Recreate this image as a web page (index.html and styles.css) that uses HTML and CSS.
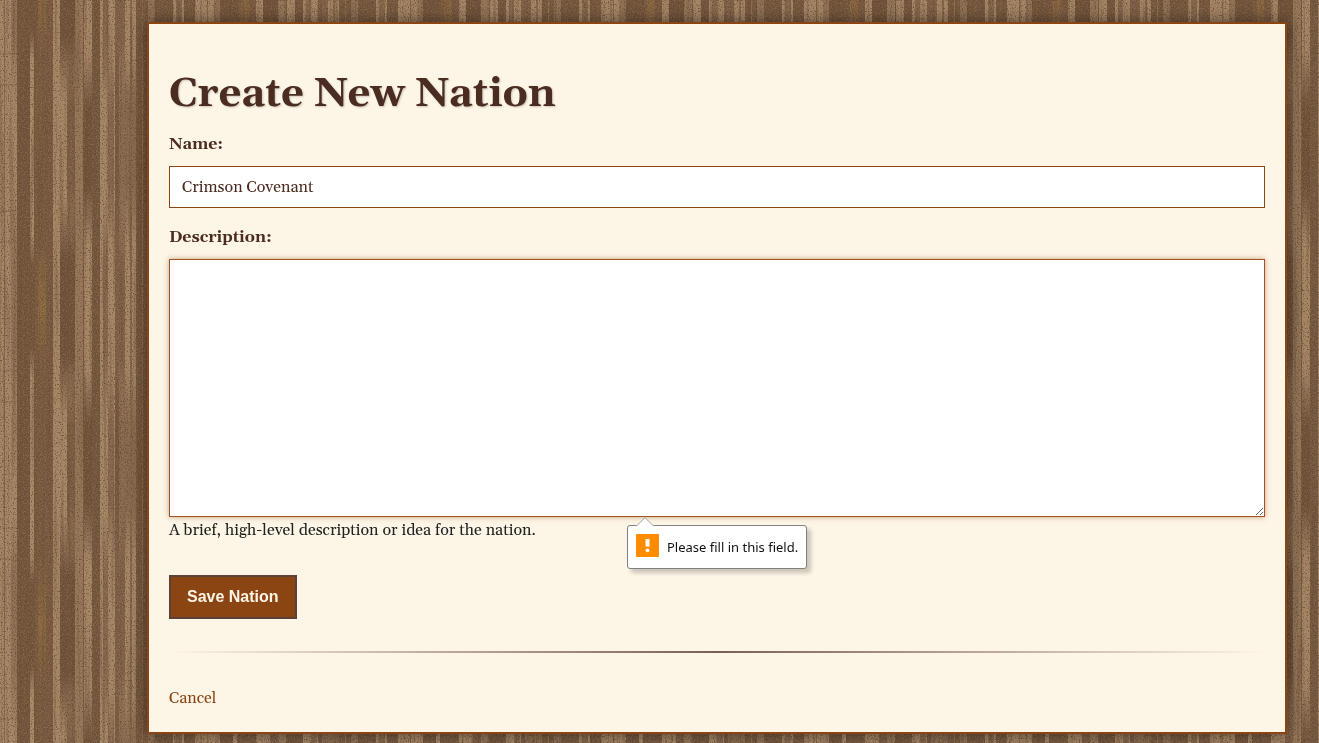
FILE: index.html
```html
<!DOCTYPE html>
<html lang="en">
<head>
<meta charset="utf-8">
<title>Create New Nation</title>
<link rel="stylesheet" href="styles.css">
</head>
<body>
<svg class="wood" aria-hidden="true">
  <defs>
    <filter id="speckle" x="0" y="0" width="100%" height="100%" color-interpolation-filters="sRGB">
      <feTurbulence type="fractalNoise" baseFrequency="0.83 0.71" numOctaves="2" seed="8"/>
      <feColorMatrix values="0 0 0 0 0.38  0 0 0 0 0.27  0 0 0 0 0.18  5 0 0 0 -2.7"/>
    </filter>
    <filter id="fleck" x="0" y="0" width="100%" height="100%" color-interpolation-filters="sRGB">
      <feTurbulence type="fractalNoise" baseFrequency="0.77 0.63" numOctaves="2" seed="21"/>
      <feColorMatrix values="0 0 0 0 0.68  0 0 0 0 0.54  0 0 0 0 0.38  5 0 0 0 -2.6"/>
    </filter>
    <filter id="streak" x="0" y="0" width="100%" height="100%" color-interpolation-filters="sRGB">
      <feTurbulence type="fractalNoise" baseFrequency="0.31 0.008" numOctaves="2" seed="3"/>
      <feColorMatrix values="0 0 0 0 0.42  0 0 0 0 0.31  0 0 0 0 0.22  5 0 0 0 -2.5"/>
    </filter>
    <linearGradient id="mid" gradientUnits="userSpaceOnUse" x1="0" y1="148" x2="0" y2="306" spreadMethod="reflect">
      <stop offset="0.3" stop-color="#6f523b" stop-opacity="0"/>
      <stop offset="0.7" stop-color="#6f523b"/>
    </linearGradient>
    <linearGradient id="end" gradientUnits="userSpaceOnUse" x1="0" y1="148" x2="0" y2="306" spreadMethod="reflect">
      <stop offset="0.25" stop-color="#6f523b"/>
      <stop offset="0.6" stop-color="#6f523b" stop-opacity="0"/>
    </linearGradient>
    <linearGradient id="light" gradientUnits="userSpaceOnUse" x1="0" y1="148" x2="0" y2="306" spreadMethod="reflect">
      <stop offset="0.55" stop-color="#a88a6a"/>
      <stop offset="0.75" stop-color="#a88a6a" stop-opacity="0"/>
    </linearGradient>
    <linearGradient id="ochre" gradientUnits="userSpaceOnUse" x1="0" y1="148" x2="0" y2="306" spreadMethod="reflect">
      <stop offset="0.6" stop-color="#8b6840" stop-opacity="0"/>
      <stop offset="1" stop-color="#8b6840"/>
    </linearGradient>
    <pattern id="planks" width="203" height="317" patternUnits="userSpaceOnUse">
      <rect width="203" height="317" fill="#a58667"/>
      <rect x="4" width="1" height="317" fill="#84674c"/>
      <rect x="11" width="6" height="317" fill="url(#mid)" opacity="0.4"/>
      <rect x="17" width="18" height="317" fill="#73553d"/>
      <rect x="30" width="4" height="317" fill="url(#light)"/>
      <rect x="35" width="18" height="317" fill="#785a41"/>
      <rect x="38" width="8" height="317" fill="url(#ochre)"/>
      <rect x="60" width="15" height="317" fill="url(#mid)"/>
      <rect x="67" width="8" height="317" fill="url(#end)" opacity="0.8"/>
      <rect x="75" width="8" height="317" fill="#94775a"/>
      <rect x="83" width="10" height="317" fill="url(#end)"/>
      <rect x="83" width="1" height="317" fill="#765940"/>
      <rect x="92" width="8" height="317" fill="#74573f"/>
      <rect x="103" width="5" height="317" fill="url(#mid)" opacity="0.6"/>
      <rect x="108" width="6" height="317" fill="url(#end)" opacity="0.6"/>
      <rect x="115" width="4" height="317" fill="#7d6047"/>
      <rect x="119" width="6" height="317" fill="url(#mid)" opacity="0.7"/>
      <rect x="115" width="21" height="317" fill="url(#end)" opacity="0.55"/>
      <rect x="130" width="2" height="317" fill="#84674c"/>
      <rect x="136" width="12" height="317" fill="#765940"/>
      <rect x="142" width="1" height="317" fill="#94714a"/>
      <rect x="148" width="7" height="317" fill="#8d7055"/>
      <rect x="155" width="18" height="317" fill="#755840"/>
      <rect x="176" width="6" height="317" fill="#84674c"/>
      <rect x="184" width="11" height="317" fill="#765940"/>
      <path d="M0 54h17M0 85h28M0 211h17M0 242h28" stroke="#765940" opacity="0.6"/>
    </pattern>
  </defs>
  <rect width="100%" height="100%" fill="url(#planks)"/>
  <rect width="100%" height="100%" filter="url(#streak)" opacity="0.35"/>
  <rect width="100%" height="100%" filter="url(#speckle)" opacity="0.7"/>
  <rect width="100%" height="100%" filter="url(#fleck)" opacity="0.35"/>
</svg>
<main class="panel">
  <h1 class="title">Create New Nation</h1>
  <form class="form">
    <label class="label" for="name">Name:</label>
    <input class="field" id="name" type="text" value="Crimson Covenant">
    <label class="label" for="description">Description:</label>
    <div class="description">
      <textarea class="field area" id="description" aria-describedby="hint"></textarea>
      <div class="tip" role="alert">
        <svg class="tip-arrow" width="18" height="10" viewBox="0 0 18 10" aria-hidden="true"><path d="M0 10V9L9 .7 18 9v1z" fill="#fff"/><path d="M.5 9 9 .7 17.500 9" fill="none" stroke="#a0a0a0"/></svg>
        <svg class="tip-icon" width="23" height="23" viewBox="0 0 23 23" aria-hidden="true"><rect width="23" height="23" rx="1" fill="#ff8c00"/><path d="M9.500 5h4v7.500h-4z" fill="#fff"/><circle cx="11.500" cy="16.300" r="1.900" fill="#fff"/></svg>
        <span>Please fill in this field.</span>
      </div>
    </div>
    <p class="hint" id="hint">A brief, high-level description or idea for the nation.</p>
    <button class="save" type="button">Save Nation</button>
  </form>
  <hr class="rule">
  <a class="cancel" href="#">Cancel</a>
</main>
</body>
</html>
```
FILE: styles.css
```css
* { box-sizing: border-box; }

body {
  margin: 0;
  padding: 22px 32px 9px 147px;
  background: #86694f;
  color: #222;
  font-family: Georgia, Gelasio, "DejaVu Serif", serif;
  font-size: 16px;
  line-height: 26px;
}

.wood {
  position: fixed;
  inset: 0;
  z-index: -1;
  width: 100%;
  height: 100%;
}

.panel {
  padding: 44px 20px 21px;
  border: 2px solid #8b4513;
  background: #fdf5e6;
  box-shadow: 0 0 15px rgba(0, 0, 0, 0.5);
}

.title {
  margin: 0 0 9px;
  color: #4a2c20;
  font-size: 40px;
  line-height: 54px;
  text-shadow: 1px 1px 2px rgba(0, 0, 0, 0.2);
}

.form { display: flex; flex-direction: column; }

.label {
  margin-bottom: 9px;
  color: #4a2c20;
  font-weight: bold;
}

.field {
  display: block;
  width: 100%;
  height: 42px;
  margin: 0 0 16px;
  padding: 8px 12px;
  border: 1px solid #8b4513;
  border-radius: 0;
  outline: none;
  background: #fff;
  color: #4a2c20;
  font: inherit;
}

.description { position: relative; }

.area {
  height: 258px;
  margin: 0;
  border-color: #a0522d;
  box-shadow: 0 0 5px rgba(139, 69, 19, 0.5);
  resize: vertical;
}

.tip {
  position: absolute;
  top: 266px;
  left: 458px;
  display: flex;
  align-items: center;
  gap: 8px;
  height: 44px;
  padding: 0 8px;
  border: 1px solid #808080;
  border-radius: 3px;
  background: #fff;
  box-shadow: 4px 4px 4px rgba(0, 0, 0, 0.2);
  color: #111;
  font-family: "Noto Sans", sans-serif;
  font-size: 13px;
  white-space: nowrap;
}

.tip-arrow {
  position: absolute;
  top: -9px;
  left: 8px;
}

.tip-icon { margin-bottom: 3px; }

.hint { margin: 0 0 32px; }

.save {
  align-self: flex-start;
  height: 44px;
  padding: 0 16px;
  border: 2px solid #5d4037;
  border-radius: 0;
  background: #8b4513;
  color: #fdf5e6;
  font: bold 16px "Liberation Sans", Arial, sans-serif;
}

.rule {
  height: 2px;
  margin: 32px 0;
  border: 0;
  background: linear-gradient(to right, transparent, #7a6052, transparent);
}

.cancel {
  color: #8b4513;
  text-decoration: none;
}
```
